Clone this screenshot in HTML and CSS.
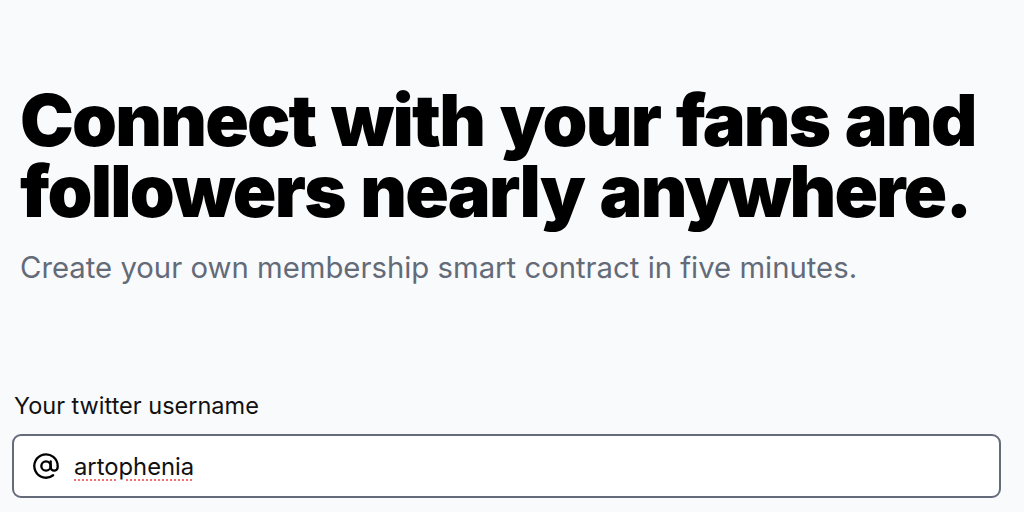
FILE: index.html
```html
<!DOCTYPE html>
<html lang="en">
<head>
<meta charset="utf-8">
<title>Connect with your fans</title>
<link rel="stylesheet" href="styles.css">
</head>
<body>
<main class="page">
  <section class="hero">
    <h1 class="title">Connect with your fans and followers nearly anywhere.</h1>
    <p class="subtitle">Create your own membership smart contract in five minutes.</p>
  </section>
  <form class="form">
    <label class="label">Your twitter username</label>
    <div class="field">
      <svg class="at-icon" viewBox="0 0 24 24" fill="none" stroke="currentColor" stroke-width="2" stroke-linecap="round" stroke-linejoin="round"><circle cx="12" cy="12" r="4"/><path d="M16 8v5a3 3 0 0 0 6 0v-1a10 10 0 1 0-3.92 7.94"/></svg>
      <span class="value">artophenia</span>
    </div>
  </form>
</main>
</body>
</html>
```

FILE: styles.css
```css
* { box-sizing: border-box; }
html, body { margin: 0; padding: 0; }
body {
  background: #f9fafb;
  font-family: Inter, "Noto Sans", sans-serif;
  color: #000;
  width: 1024px;
  height: 512px;
  overflow: hidden;
}
.page {
  padding: 84px 23px 0 12px;
}
.hero {
  padding-left: 8px;
}
.title {
  margin: 0;
  font-size: 72px;
  line-height: 71px;
  font-weight: 900;
  letter-spacing: -0.025em;
  word-spacing: 3px;
  color: #000;
}
.subtitle {
  margin: 24px 0 0;
  font-size: 29.3px;
  line-height: 36px;
  color: #636a78;
}
.form {
  margin-top: 105px;
  display: flex;
  flex-direction: column;
}
.label {
  padding-left: 2px;
  font-size: 23.5px;
  line-height: 30px;
  color: #111;
}
.field {
  margin-top: 13px;
  height: 64px;
  background: #fff;
  border: 2px solid #646b7b;
  border-radius: 9px;
  display: flex;
  align-items: center;
  padding-left: 18px;
  gap: 14px;
}
.at-icon {
  width: 28px;
  height: 28px;
  color: #000;
  flex: none;
}
.value {
  font-size: 23.8px;
  color: #111;
  text-decoration: underline dotted #f87171;
  text-decoration-thickness: 2px;
  text-underline-offset: 5px;
}
```
